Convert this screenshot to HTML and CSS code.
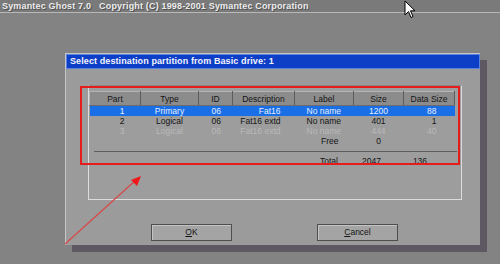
FILE: index.html
```html
<!DOCTYPE html>
<html lang="en">
<head>
    <meta charset="UTF-8">
    <title>Symantec Ghost</title>
    <link rel="stylesheet" href="styles.css">
</head>
<body>
<div class="screen">
    <div class="topbar">Symantec Ghost 7.0&nbsp;&nbsp;&nbsp;Copyright (C) 1998-2001 Symantec Corporation</div>

    <div class="dialog">
        <div class="dlgTitle">Select destination partition from Basic drive: 1</div>

        <div class="panel">
            <table class="parts">
                <thead>
                <tr>
                    <th class="cPart">Part</th>
                    <th class="cType">Type</th>
                    <th class="cId">ID</th>
                    <th class="cDesc">Description</th>
                    <th class="cLabel">Label</th>
                    <th class="cSize">Size</th>
                    <th class="cData">Data Size</th>
                </tr>
                </thead>
                <tbody>
                <tr class="selected">
                    <td class="nPart">1</td>
                    <td class="nType">Primary</td>
                    <td class="nId">06</td>
                    <td class="nDesc">Fat16</td>
                    <td class="nLabel">No name</td>
                    <td class="nSize">1200</td>
                    <td class="nData">88</td>
                </tr>
                <tr>
                    <td class="nPart">2</td>
                    <td class="nType">Logical</td>
                    <td class="nId">06</td>
                    <td class="nDesc">Fat16 extd</td>
                    <td class="nLabel">No name</td>
                    <td class="nSize">401</td>
                    <td class="nData">1</td>
                </tr>
                <tr class="disabled">
                    <td class="nPart">3</td>
                    <td class="nType">Logical</td>
                    <td class="nId">06</td>
                    <td class="nDesc">Fat16 extd</td>
                    <td class="nLabel">No name</td>
                    <td class="nSize">444</td>
                    <td class="nData">40</td>
                </tr>
                <tr>
                    <td></td>
                    <td></td>
                    <td></td>
                    <td></td>
                    <td class="nFree">Free</td>
                    <td class="nSize">0</td>
                    <td></td>
                </tr>
                </tbody>
            </table>
            <div class="totals">
                <span class="tLabel">Total</span>
                <span class="tSize">2047</span>
                <span class="tData">136</span>
            </div>
        </div>

        <div class="buttons">
            <div class="btn"><u>O</u>K</div>
            <div class="btn"><u>C</u>ancel</div>
        </div>
    </div>

    <!-- annotation drawn over the screenshot -->
    <div class="redBox"></div>
    <svg class="arrow" width="500" height="264" viewBox="0 0 500 264">
        <line x1="65" y1="244" x2="136" y2="180" stroke="#d84848" stroke-width="1.2"/>
        <polygon points="141,176 131,180 137,186" fill="#f01818"/>
    </svg>

    <svg class="cursor" width="12" height="19" viewBox="0 0 12 19">
        <path d="M1 1 L1 15 L4.5 11.5 L7 17.5 L9 16.5 L6.5 10.8 L11 10.8 Z" fill="#fff" stroke="#000" stroke-width="1"/>
    </svg>
</div>
</body>
</html>
```

FILE: styles.css
```css
body{
margin:0;
background-color:#838383;
font-family:"Liberation Sans", Arial, sans-serif;
}

.screen{
position:relative;
width:500px;
height:264px;
overflow:hidden;
}

.topbar{
height:12px;
line-height:12px;
padding-left:2px;
font-size:9px;
font-weight:bold;
letter-spacing:0.17px;
color:#ececec;
text-shadow:1px 1px 0 #505050;
background-color:#7a7a7a;
border-bottom:1px solid #b8b8b8;
white-space:nowrap;
}

.dialog{
width:414px;
height:191px;
margin:40px 0 0 65px;
background-color:#9b9b9b;
border-left:1px solid #c6c6c6;
border-top:1px solid #c6c6c6;
box-shadow:7px 7px 0 #5d5862;
}

.dlgTitle{
height:13px;
line-height:13px;
padding-left:3px;
font-size:9px;
font-weight:bold;
letter-spacing:0.1px;
color:#f4f4ff;
background-color:#0d3fc6;
border:1px solid #5a82e0;
white-space:nowrap;
}

.panel{
width:372px;
height:108px;
margin:16px 0 0 22px;
padding-top:5px;
background-color:#9d9d9d;
border:1px solid #dcdcdc;
border-top-color:#8a8a8a;
}

.parts{
border-collapse:collapse;
table-layout:fixed;
width:358px;
font-size:8.5px;
color:#141414;
}

.parts th{
height:13px;
padding:0;
font-weight:normal;
background-color:#8c8c8c;
border-top:1px solid #b4b4b4;
border-left:1px solid #b4b4b4;
border-right:1px solid #5c5c5c;
border-bottom:1px solid #6c6c6c;
}

.parts td{
height:10px;
line-height:10px;
padding:0;
white-space:nowrap;
}

.cPart{ width:50px; }
.cType{ width:57px; }
.cId{ width:33px; }
.cDesc{ width:61px; }
.cLabel{ width:58px; }
.cSize{ width:49px; }
.cData{ width:50px; }

.nPart{ text-align:right; padding-right:16px !important; }
.nType{ text-align:center; }
.nId{ text-align:left; padding-left:13px !important; }
.nDesc{ text-align:right; padding-right:14px !important; }
.nLabel{ text-align:left; padding-left:12px !important; }
.nFree{ text-align:right; padding-right:15px !important; }
.nSize{ text-align:center; }
.nData{ text-align:right; padding-right:18px !important; }

.selected td{
background-color:#1a6fe6;
color:#e6eeff;
}

.disabled td{
color:#b9b9b9;
}

.totals{
display:flex;
margin:5px 0 0 5px;
padding-top:4px;
width:363px;
border-top:1px solid #5e5e5e;
font-size:8.5px;
color:#141414;
}

.tLabel{ margin-left:226px; }
.tSize{ margin-left:24px; }
.tData{ margin-left:32px; }

.buttons{
display:flex;
gap:85px;
margin:24px 0 0 85px;
}

.btn{
width:79px;
height:15px;
line-height:15px;
text-align:center;
font-size:8.5px;
color:#141414;
background-color:#a4a4a4;
border:1px solid #4e4e4e;
box-shadow:inset 1px 1px 0 #c4c4c4;
}

.redBox{
position:absolute;
left:80px;
top:86px;
width:376px;
height:75px;
border:2px solid #e41c1c;
}

.arrow{
position:absolute;
left:0;
top:0;
}

.cursor{
position:absolute;
left:404px;
top:0;
}
```
